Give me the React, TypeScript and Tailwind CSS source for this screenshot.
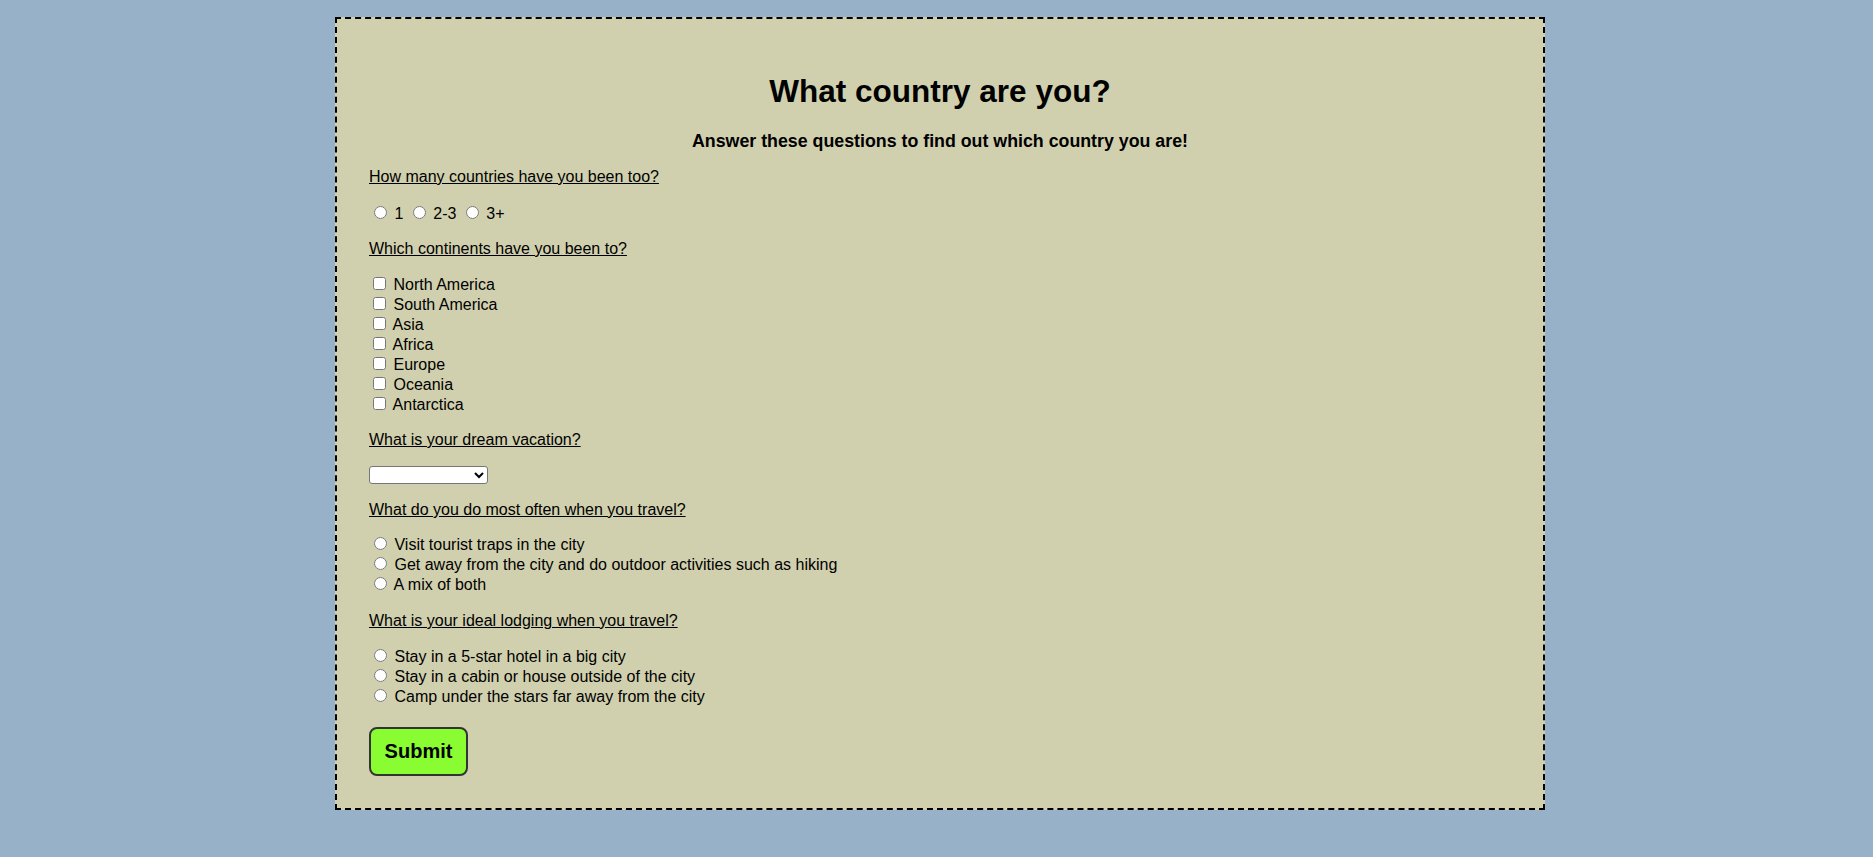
import React from "react";

const Question = ({ children, className = "" }: { children: React.ReactNode; className?: string }) => (
  <p className={`underline leading-5 text-[16px] ${className}`}>{children}</p>
);

const Radio = ({ name }: { name: string }) => (
  <input type="radio" name={name} className="ml-[5px] mr-[3px] mt-[3px]" />
);

const Check = () => <input type="checkbox" className="ml-[4px] mr-[3px] my-[3px]" />;

const continents = ["North America", "South America", "Asia", "Africa", "Europe", "Oceania", "Antarctica"];

const activities = [
  "Visit tourist traps in the city",
  "Get away from the city and do outdoor activities such as hiking",
  "A mix of both",
];

const lodging = [
  "Stay in a 5-star hotel in a big city",
  "Stay in a cabin or house outside of the city",
  "Camp under the stars far away from the city",
];

export default function App() {
  return (
    <div
      className="min-h-screen bg-[#97b2c8] pt-[17px] pb-[48px] text-black"
      style={{ fontFamily: '"Liberation Sans", Arial, sans-serif' }}
    >
      <form className="ml-[335px] w-[1210px] border-2 border-dashed border-black bg-[#d1d0ae] px-[32px] pt-[53px] pb-[31px]">
        {/* Header */}
        <h1 className="text-center text-[31.5px] font-bold leading-[38px]">What country are you?</h1>
        <h3 className="mt-[20px] text-center text-[17.8px] font-bold leading-[22px]">
          Answer these questions to find out which country you are!
        </h3>

        {/* Q1 */}
        <Question className="mt-[15px]">How many countries have you been too?</Question>
        <div className="mt-[16px] leading-5 text-[16px]">
          <Radio name="count" /> 1 <Radio name="count" /> 2-3 <Radio name="count" /> 3+
        </div>

        {/* Q2 */}
        <Question className="mt-[15px]">Which continents have you been to?</Question>
        <div className="mt-[15px] leading-5 text-[16px]">
          {continents.map((c) => (
            <div key={c} className="h-5">
              <Check /> {c}
            </div>
          ))}
        </div>

        {/* Q3 */}
        <Question className="mt-[16px]">What is your dream vacation?</Question>
        <div className="mt-[16px] flex">
          <select className="h-[18px] w-[119px] rounded-[3px] border border-[#767676] bg-white text-[13px]">
            <option></option>
          </select>
        </div>

        {/* Q4 */}
        <Question className="mt-[16px]">What do you do most often when you travel?</Question>
        <div className="mt-[14px] leading-5 text-[16px]">
          {activities.map((a) => (
            <div key={a} className="h-5">
              <Radio name="activity" /> {a}
            </div>
          ))}
        </div>

        {/* Q5 */}
        <Question className="mt-[17px]">What is your ideal lodging when you travel?</Question>
        <div className="mt-[15px] leading-5 text-[16px]">
          {lodging.map((l) => (
            <div key={l} className="h-5">
              <Radio name="lodging" /> {l}
            </div>
          ))}
        </div>

        <button
          type="button"
          className="mt-[21px] mb-[1px] block h-[49px] w-[99px] rounded-[8px] border-2 border-[#333] bg-[#8afc32] pb-[2px] text-[20px] font-bold"
        >
          Submit
        </button>
      </form>
    </div>
  );
}
